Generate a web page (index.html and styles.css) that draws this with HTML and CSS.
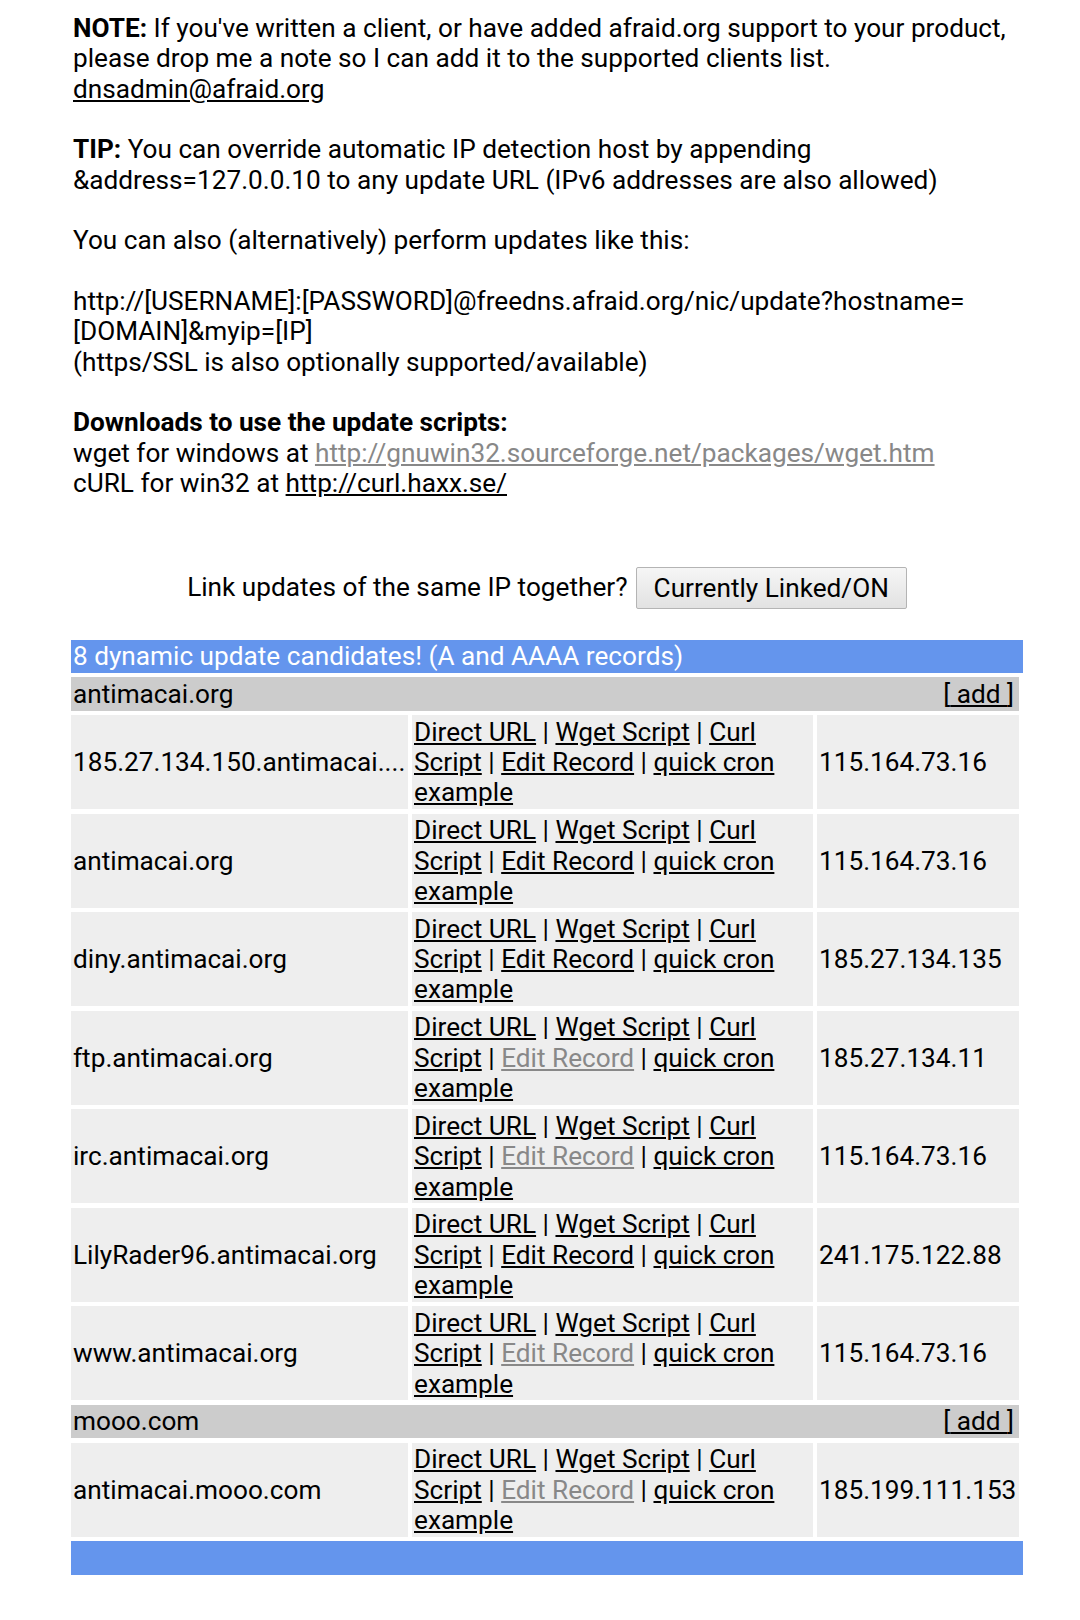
FILE: index.html
```html
<!DOCTYPE html>
<html>
<head>
<meta charset="utf-8">
<link rel="stylesheet" href="styles.css">
</head>
<body>
<div class="page">
  <div class="info">
    <b>NOTE:</b> If you've written a client, or have added afraid.org support to your product, please drop me a note so I can add it to the supported clients list.<br>
    <a href="#">dnsadmin@afraid.org</a><br>
    <br>
    <b>TIP:</b> You can override automatic IP detection host by appending &amp;address=127.0.0.10 to any update URL (IPv6 addresses are also allowed)<br>
    <br>
    You can also (alternatively) perform updates like this:<br>
    <br>
    http://[USERNAME]:[PASSWORD]@freedns.afraid.org/nic/update?hostname=<br>
    [DOMAIN]&amp;myip=[IP]<br>
    (https/SSL is also optionally supported/available)<br>
    <br>
    <b>Downloads to use the update scripts:</b><br>
    wget for windows at <a href="#" class="dim">http://gnuwin32.sourceforge.net/packages/wget.htm</a><br>
    cURL for win32 at <a href="#">http://curl.haxx.se/</a>
  </div>

  <div class="link-row">
    <span>Link updates of the same IP together?</span>
    <button class="btn">Currently Linked/ON</button>
  </div>

  <div class="banner">8 dynamic update candidates! (A and AAAA records)</div>

  <div class="records">
    <div class="group"><span>antimacai.org</span><span>[<a href="#">&nbsp;add&nbsp;</a>]</span></div>

    <div class="cell">185.27.134.150.antimacai....</div>
    <div class="cell links"><a href="#">Direct URL</a> | <a href="#">Wget Script</a> | <a href="#">Curl Script</a> | <a href="#">Edit Record</a> | <a href="#">quick cron example</a></div>
    <div class="cell">115.164.73.16</div>

    <div class="cell">antimacai.org</div>
    <div class="cell links"><a href="#">Direct URL</a> | <a href="#">Wget Script</a> | <a href="#">Curl Script</a> | <a href="#">Edit Record</a> | <a href="#">quick cron example</a></div>
    <div class="cell">115.164.73.16</div>

    <div class="cell">diny.antimacai.org</div>
    <div class="cell links"><a href="#">Direct URL</a> | <a href="#">Wget Script</a> | <a href="#">Curl Script</a> | <a href="#">Edit Record</a> | <a href="#">quick cron example</a></div>
    <div class="cell">185.27.134.135</div>

    <div class="cell">ftp.antimacai.org</div>
    <div class="cell links"><a href="#">Direct URL</a> | <a href="#">Wget Script</a> | <a href="#">Curl Script</a> | <a href="#" class="dim">Edit Record</a> | <a href="#">quick cron example</a></div>
    <div class="cell">185.27.134.11</div>

    <div class="cell">irc.antimacai.org</div>
    <div class="cell links"><a href="#">Direct URL</a> | <a href="#">Wget Script</a> | <a href="#">Curl Script</a> | <a href="#" class="dim">Edit Record</a> | <a href="#">quick cron example</a></div>
    <div class="cell">115.164.73.16</div>

    <div class="cell">LilyRader96.antimacai.org</div>
    <div class="cell links"><a href="#">Direct URL</a> | <a href="#">Wget Script</a> | <a href="#">Curl Script</a> | <a href="#">Edit Record</a> | <a href="#">quick cron example</a></div>
    <div class="cell">241.175.122.88</div>

    <div class="cell">www.antimacai.org</div>
    <div class="cell links"><a href="#">Direct URL</a> | <a href="#">Wget Script</a> | <a href="#">Curl Script</a> | <a href="#" class="dim">Edit Record</a> | <a href="#">quick cron example</a></div>
    <div class="cell">115.164.73.16</div>

    <div class="group"><span>mooo.com</span><span>[<a href="#">&nbsp;add&nbsp;</a>]</span></div>

    <div class="cell">antimacai.mooo.com</div>
    <div class="cell links"><a href="#">Direct URL</a> | <a href="#">Wget Script</a> | <a href="#">Curl Script</a> | <a href="#" class="dim">Edit Record</a> | <a href="#">quick cron example</a></div>
    <div class="cell">185.199.111.153</div>
  </div>

  <div class="banner footer">&nbsp;</div>
</div>
</body>
</html>
```

FILE: styles.css
```css
html, body {
  margin: 0;
  padding: 0;
  background: #fff;
}

body {
  font-family: Roboto, "Liberation Sans", sans-serif;
  font-size: 26.2px;
  line-height: 30.35px;
  color: #000;
}

.page {
  width: 952px;
  margin-left: 71px;
  padding-top: 13px;
}

a {
  color: #000;
  text-decoration: underline;
}

a.dim {
  color: #888;
}

.info {
  padding: 0 2px;
}

.info b {
  font-weight: bold;
}

.link-row {
  display: flex;
  justify-content: center;
  align-items: center;
  gap: 8px;
  margin-top: 68px;
}

.btn {
  font-family: Roboto, "Liberation Sans", sans-serif;
  font-size: 26.2px;
  color: #000;
  height: 42px;
  padding: 0 17px;
  border: 1px solid #b4b4b4;
  border-radius: 2px;
  background: linear-gradient(#f6f6f6, #e2e2e2);
}

.banner {
  background: #6495ed;
  color: #fff;
  padding: 1.5px 2px;
  margin-top: 31px;
}

.banner.footer {
  margin-top: 4.5px;
}

.records {
  width: 948px;
  margin-top: 4.5px;
  display: grid;
  grid-template-columns: 337px 401px 202px;
  row-gap: 4.5px;
  column-gap: 4px;
}

.group {
  grid-column: 1 / -1;
  display: flex;
  justify-content: space-between;
  background: #cccccc;
  padding: 1.5px 5px 1.5px 2px;
}

.cell {
  background: #eeeeee;
  padding: 1.5px 2px;
  display: flex;
  align-items: center;
}

.cell.links {
  display: block;
}
```
